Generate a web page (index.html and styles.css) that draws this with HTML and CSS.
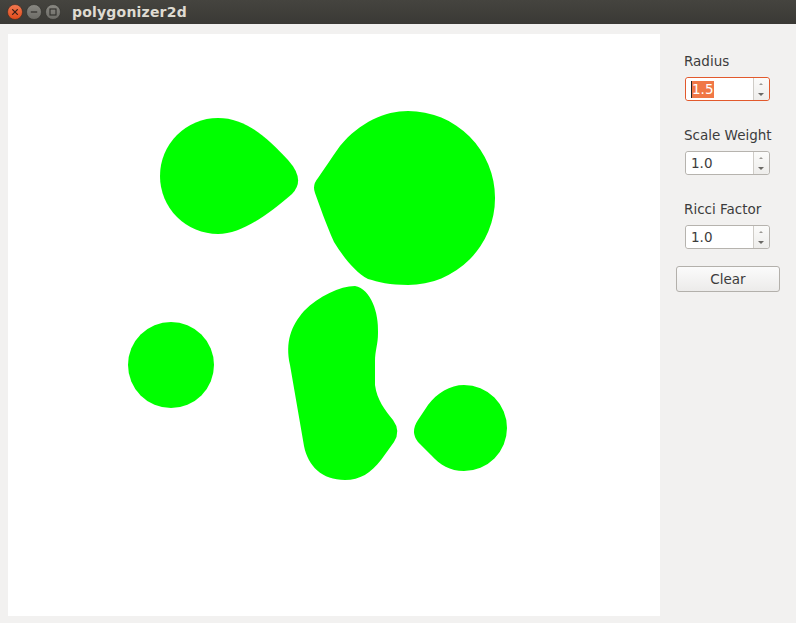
FILE: index.html
```html
<!DOCTYPE html>
<html>
<head>
<meta charset="utf-8">
<link rel="stylesheet" href="styles.css">
</head>
<body>
<div class="titlebar">
  <div class="wbtns">
    <svg class="wbtn" width="16" height="16" viewBox="0 0 16 16">
      <defs>
        <linearGradient id="gc" x1="0" y1="0" x2="0" y2="1"><stop offset="0" stop-color="#f37a52"/><stop offset="1" stop-color="#df4a1a"/></linearGradient>
        <linearGradient id="gg" x1="0" y1="0" x2="0" y2="1"><stop offset="0" stop-color="#8a8983"/><stop offset="1" stop-color="#6c6b66"/></linearGradient>
      </defs>
      <circle cx="8" cy="8" r="7.5" fill="url(#gc)" stroke="#3a2a22" stroke-width="0.6"/>
      <path d="M5.6 5.6 L10.4 10.4 M10.4 5.6 L5.6 10.4" stroke="#3b2018" stroke-width="1.3" stroke-linecap="round"/>
    </svg>
    <svg class="wbtn" width="16" height="16" viewBox="0 0 16 16">
      <circle cx="8" cy="8" r="7.5" fill="url(#gg)" stroke="#2e2d2a" stroke-width="0.6"/>
      <path d="M4.8 8 L11.2 8" stroke="#2f2e2b" stroke-width="1.2"/>
    </svg>
    <svg class="wbtn" width="16" height="16" viewBox="0 0 16 16">
      <circle cx="8" cy="8" r="7.5" fill="url(#gg)" stroke="#2e2d2a" stroke-width="0.6"/>
      <rect x="5" y="5" width="6" height="6" fill="none" stroke="#2f2e2b" stroke-width="1.1"/>
    </svg>
  </div>
  <div class="title">polygonizer2d</div>
</div>
<div class="main">
  <div class="canvas">
    <svg width="652" height="582" viewBox="8 34 652 582">
      <g fill="#00ff00">
        <path d="M218,118 C245,118 266,136 288,160 Q306,180 292,194 C270,213 242,234 218,234 A58 58 0 0 1 218,118 Z"/>
        <path d="M408,111 A87 87 0 1 1 408,285 C390,285 378,282 368,279 C355,272 344,258 334,242 C326,224 319,204 315,193 Q312,185 318,178 C325,168 332,157 340,146 C360,122 385,111 408,111 Z"/>
        <circle cx="171" cy="365" r="43"/>
        <path d="M355,286 C371,289 379,313 378,333 C378,345 375,350 375,362 L375,385 C377,400 385,410 393,420 Q401,431 394,442 L381,460 C371,473 360,480 345,480 C322,480 308,466 304,446 L290,365 C285,342 291,326 304,311 C319,296 340,286 355,286 Z"/>
        <path d="M464,385 A43 43 0 1 1 464,471 C450,471 440,465 431,455 L418,442 Q410,432 418,420 L428,405 C437,393 450,385 464,385 Z"/>
      </g>
    </svg>
  </div>
  <div class="panel">
    <div class="group">
      <div class="label">Radius</div>
      <div class="spin focused">
        <div class="field"><span class="caret"></span><span class="sel">1.5</span></div>
        <div class="arrows"><span class="up"></span><span class="down"></span></div>
      </div>
    </div>
    <div class="group">
      <div class="label">Scale Weight</div>
      <div class="spin">
        <div class="field">1.0</div>
        <div class="arrows"><span class="up"></span><span class="down"></span></div>
      </div>
    </div>
    <div class="group">
      <div class="label">Ricci Factor</div>
      <div class="spin">
        <div class="field">1.0</div>
        <div class="arrows"><span class="up"></span><span class="down"></span></div>
      </div>
    </div>
    <button class="clear">Clear</button>
  </div>
</div>
</body>
</html>
```
FILE: styles.css
```css
html, body {
  margin: 0;
  padding: 0;
  background: #f2f1f0;
  width: 796px;
  height: 623px;
  overflow: hidden;
  font-family: "DejaVu Sans", "Noto Sans", sans-serif;
}
.titlebar {
  height: 24px;
  background: linear-gradient(#45443f, #3a3935);
  display: flex;
  align-items: center;
  box-sizing: border-box;
}
.wbtns {
  display: flex;
  gap: 3px;
  padding-left: 7px;
  align-items: center;
}
.wbtn { display: block; }
.title {
  margin-left: 11px;
  color: #dfdbd2;
  font-weight: bold;
  font-size: 14px;
  letter-spacing: 0.2px;
}
.main {
  display: flex;
  padding: 10px 0 0 8px;
}
.canvas {
  width: 652px;
  height: 582px;
  background: #ffffff;
}
.canvas svg { display: block; }
.panel {
  width: 136px;
  padding-top: 18px;
  display: flex;
  flex-direction: column;
  box-sizing: border-box;
}
.group {
  padding-left: 24px;
  height: 49px;
  margin-bottom: 25px;
  flex: none;
}
.group:nth-child(3) { margin-bottom: 17px; }
.label {
  font-size: 13.5px;
  height: 16px;
  line-height: 18px;
  color: #3c3c3c;
  margin-bottom: 9px;
}
.spin {
  margin-left: 1px;
  width: 85px;
  height: 24px;
  display: flex;
  box-sizing: border-box;
  border: 1px solid #b6b3ae;
  border-radius: 3px;
  background: #ffffff;
}
.spin.focused { border-color: #e2592c; }
.field {
  flex: 1;
  display: flex;
  align-items: center;
  padding-left: 5px;
  font-size: 13.5px;
  color: #3c3c3c;
  background: #fff;
  border-radius: 3px 0 0 3px;
}
.caret {
  width: 1px;
  height: 17px;
  background: #222;
}
.sel {
  background: #f07746;
  color: #ffffff;
  line-height: 17px;
  padding-right: 1px;
}
.arrows {
  width: 15px;
  border-left: 1px solid #cfccc7;
  background: linear-gradient(#fbfbfa, #eeedeb);
  border-radius: 0 3px 3px 0;
  position: relative;
}
.up {
  position: absolute;
  left: 5px;
  top: 5px;
  width: 0;
  height: 0;
  border-left: 2px solid transparent;
  border-right: 2px solid transparent;
  border-bottom: 2px solid #9a9893;
}
.down {
  position: absolute;
  left: 4px;
  top: 15px;
  width: 0;
  height: 0;
  border-left: 3px solid transparent;
  border-right: 3px solid transparent;
  border-top: 3px solid #6a6965;
}
.clear {
  margin-left: 16px;
  width: 104px;
  height: 26px;
  flex: none;
  border: 1px solid #b3b0ab;
  border-radius: 3px;
  background: linear-gradient(#fbfbfb, #ecebea);
  font-family: "DejaVu Sans", "Noto Sans", sans-serif;
  font-size: 13.5px;
  color: #3c3c3c;
  padding: 0;
}
```
